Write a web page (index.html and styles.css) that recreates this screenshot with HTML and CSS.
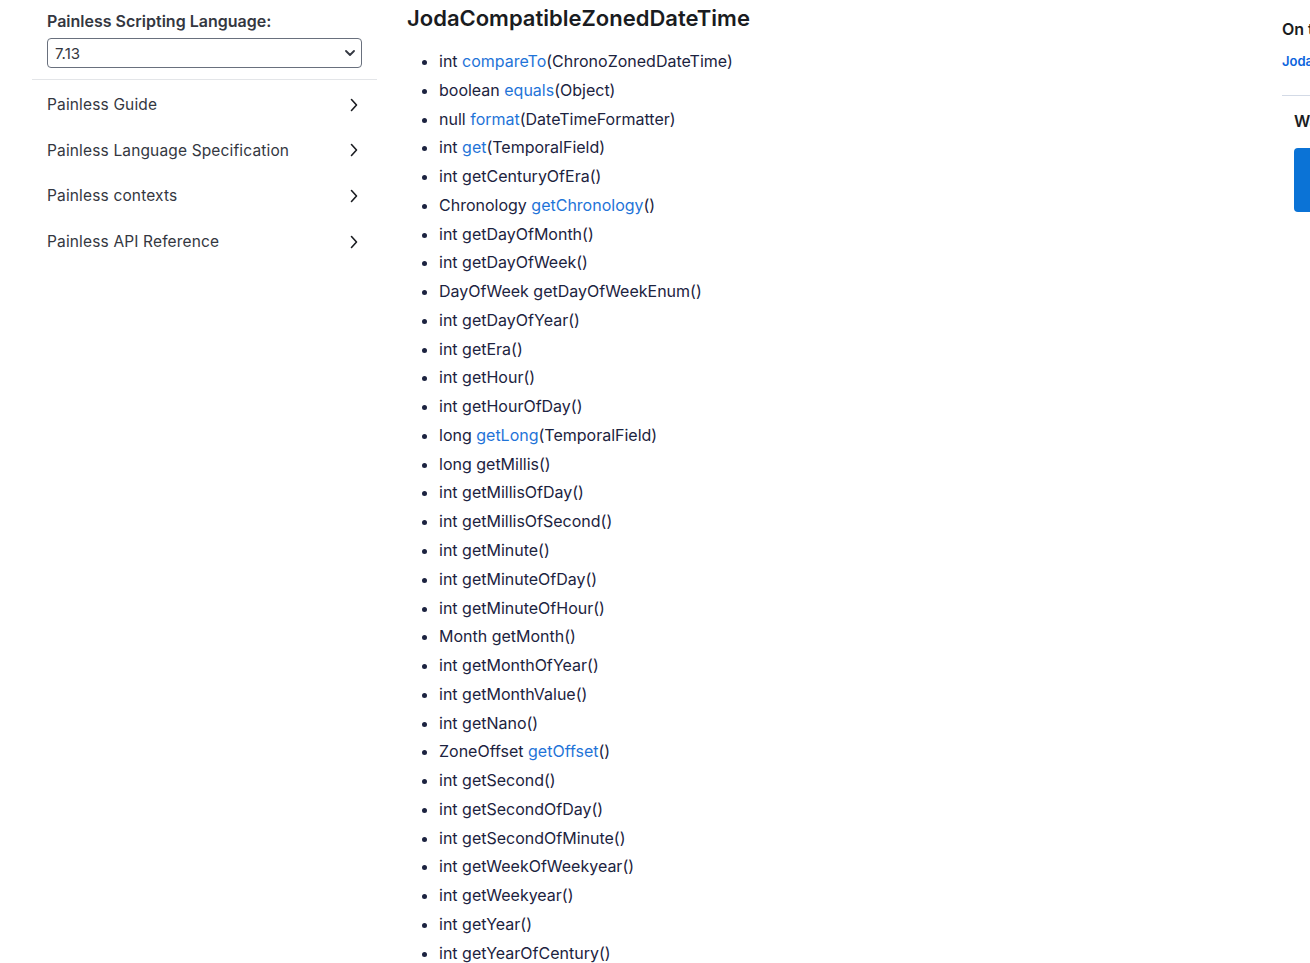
FILE: index.html
```html
<!DOCTYPE html>
<html lang="en">
<head>
<meta charset="utf-8">
<title>JodaCompatibleZonedDateTime</title>
<link rel="stylesheet" href="styles.css">
</head>
<body>
<div class="page">
  <aside class="sidebar">
    <div class="version">
      <label class="version-label" for="ver">Painless Scripting Language:</label>
      <div class="select-wrap">
        <select id="ver" class="version-select"><option>7.13</option></select>
        <svg class="select-caret" width="10" height="6" viewBox="0 0 10 6"><path d="M1 1l4 4 4-4" fill="none" stroke="#343741" stroke-width="1.8" stroke-linecap="round" stroke-linejoin="round"/></svg>
      </div>
    </div>
    <nav class="nav">
      <a class="nav-item" href="#"><span>Painless Guide</span><svg width="8" height="14" viewBox="0 0 8 14"><path d="M1.5 1.5l5 5.5-5 5.5" fill="none" stroke="#1a1c21" stroke-width="1.6" stroke-linecap="round" stroke-linejoin="round"/></svg></a>
      <a class="nav-item" href="#"><span>Painless Language Specification</span><svg width="8" height="14" viewBox="0 0 8 14"><path d="M1.5 1.5l5 5.5-5 5.5" fill="none" stroke="#1a1c21" stroke-width="1.6" stroke-linecap="round" stroke-linejoin="round"/></svg></a>
      <a class="nav-item" href="#"><span>Painless contexts</span><svg width="8" height="14" viewBox="0 0 8 14"><path d="M1.5 1.5l5 5.5-5 5.5" fill="none" stroke="#1a1c21" stroke-width="1.6" stroke-linecap="round" stroke-linejoin="round"/></svg></a>
      <a class="nav-item" href="#"><span>Painless API Reference</span><svg width="8" height="14" viewBox="0 0 8 14"><path d="M1.5 1.5l5 5.5-5 5.5" fill="none" stroke="#1a1c21" stroke-width="1.6" stroke-linecap="round" stroke-linejoin="round"/></svg></a>
    </nav>
  </aside>

  <main class="content">
    <h2 class="title">JodaCompatibleZonedDateTime</h2>
    <ul class="methods">
      <li>int <a href="#">compareTo</a>(ChronoZonedDateTime)</li>
      <li>boolean <a href="#">equals</a>(Object)</li>
      <li>null <a href="#">format</a>(DateTimeFormatter)</li>
      <li>int <a href="#">get</a>(TemporalField)</li>
      <li>int getCenturyOfEra()</li>
      <li>Chronology <a href="#">getChronology</a>()</li>
      <li>int getDayOfMonth()</li>
      <li>int getDayOfWeek()</li>
      <li>DayOfWeek getDayOfWeekEnum()</li>
      <li>int getDayOfYear()</li>
      <li>int getEra()</li>
      <li>int getHour()</li>
      <li>int getHourOfDay()</li>
      <li>long <a href="#">getLong</a>(TemporalField)</li>
      <li>long getMillis()</li>
      <li>int getMillisOfDay()</li>
      <li>int getMillisOfSecond()</li>
      <li>int getMinute()</li>
      <li>int getMinuteOfDay()</li>
      <li>int getMinuteOfHour()</li>
      <li>Month getMonth()</li>
      <li>int getMonthOfYear()</li>
      <li>int getMonthValue()</li>
      <li>int getNano()</li>
      <li>ZoneOffset <a href="#">getOffset</a>()</li>
      <li>int getSecond()</li>
      <li>int getSecondOfDay()</li>
      <li>int getSecondOfMinute()</li>
      <li>int getWeekOfWeekyear()</li>
      <li>int getWeekyear()</li>
      <li>int getYear()</li>
      <li>int getYearOfCentury()</li>
      <li>int getYearOfEra()</li>
    </ul>
  </main>

  <aside class="toc">
    <div class="toc-title">On this page</div>
    <a class="toc-link" href="#">JodaCompatibleZonedDateTime</a>
    <div class="feedback">
      <div class="feedback-title">Was this helpful?</div>
      <div class="feedback-btn"></div>
    </div>
  </aside>
</div>
</body>
</html>
```

FILE: styles.css
```css
html, body {
  margin: 0;
  padding: 0;
  overflow: hidden;
  background: #ffffff;
}

body {
  font-family: Inter, "Noto Sans", "Liberation Sans", sans-serif;
  color: #1c2340;
  width: 1310px;
  height: 963px;
}

.page {
  display: flex;
  align-items: flex-start;
  width: 1500px;
}

/* Sidebar */
.sidebar {
  width: 345px;
  margin-left: 32px;
  flex-shrink: 0;
}

.version {
  padding: 11px 15px 11px 15px;
  border-bottom: 1px solid #e3e5e8;
  display: flex;
  flex-direction: column;
  gap: 6px;
}

.version-label {
  font-size: 16px;
  font-weight: 600;
  color: #343741;
  line-height: 21px;
}

.select-wrap {
  position: relative;
  width: 315px;
}

.version-select {
  appearance: none;
  -webkit-appearance: none;
  width: 315px;
  height: 30px;
  box-sizing: border-box;
  border: 1px solid #69707d;
  border-radius: 4px;
  background: #fff;
  font-family: Inter, "Noto Sans", sans-serif;
  font-size: 15px;
  color: #343741;
  padding: 0 7px;
  display: block;
}

.select-caret {
  position: absolute;
  right: 7px;
  top: 12px;
  pointer-events: none;
}

.nav {
  display: flex;
  flex-direction: column;
  padding-top: 2px;
}

.nav-item {
  display: flex;
  align-items: center;
  justify-content: space-between;
  height: 45.6px;
  padding: 0 19px 0 15px;
  text-decoration: none;
  color: #343741;
  font-size: 15.5px;
  letter-spacing: 0.15px;
}

/* Content */
.content {
  width: 860px;
  margin-left: 30px;
  flex-shrink: 0;
}

.title {
  margin: 5px 0 0 0;
  font-size: 22px;
  font-weight: 600;
  line-height: 26px;
  color: #1a1c21;
}

.methods {
  margin: 16px 0 0 0;
  padding-left: 32px;
  font-size: 16px;
  line-height: 28.77px;
}

.methods a {
  color: #1f74d8;
  text-decoration: none;
}

/* TOC */
.toc {
  margin-left: 15px;
  width: 240px;
  flex-shrink: 0;
  padding-top: 19px;
}

.toc-title {
  font-size: 16px;
  font-weight: 600;
  color: #1a1c21;
  line-height: 20px;
}

.toc-link {
  display: block;
  margin-top: 14px;
  font-size: 13px;
  font-weight: 600;
  color: #0b64dd;
  text-decoration: none;
  line-height: 16px;
  padding-bottom: 26px;
  border-bottom: 1px solid #d3dae6;
}

.feedback {
  padding: 15px 0 0 12px;
}

.feedback-title {
  font-size: 16px;
  font-weight: 600;
  color: #1a1c21;
  line-height: 20px;
}

.feedback-btn {
  margin-top: 17px;
  width: 120px;
  height: 64px;
  background: #0b73d6;
  border-radius: 4px;
}
```
